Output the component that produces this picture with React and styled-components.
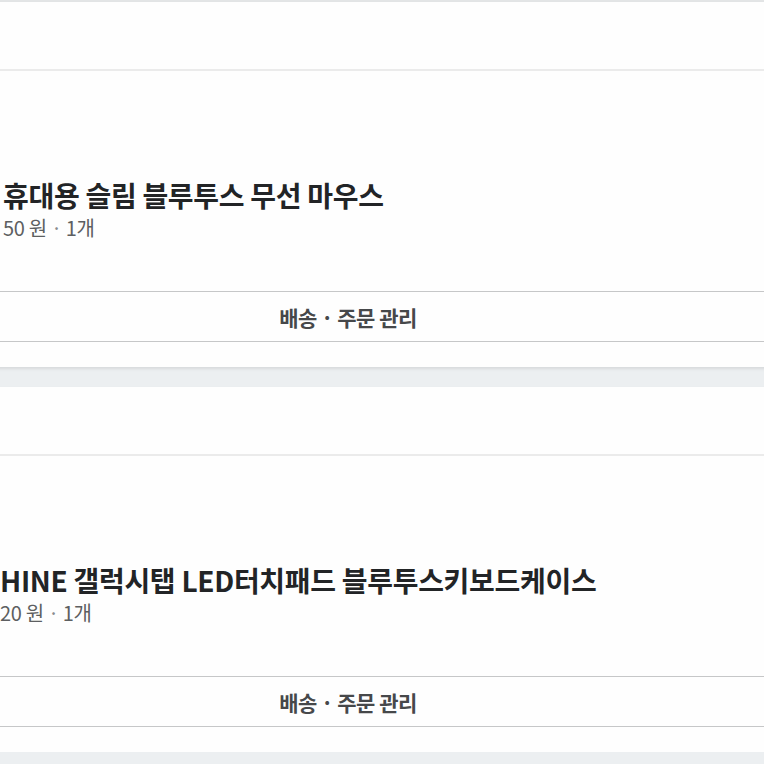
import styled, { createGlobalStyle } from "styled-components";

const GlobalStyle = createGlobalStyle`
  html, body {
    margin: 0;
    padding: 0;
    background: #eceff1;
    overflow: hidden;
  }
  body {
    font-family: "Noto Sans CJK KR", "Noto Sans", sans-serif;
  }
`;

const orders = [
  { id: 1, title: "휴대용 슬림 블루투스 무선 마우스", price: "50 원", qty: "1개" },
  {
    id: 2,
    title: "HINE 갤럭시탭 LED터치패드 블루투스키보드케이스",
    price: "20 원",
    qty: "1개",
    indent: 0,
  },
];

const App = () => {
  return (
    <>
      <GlobalStyle />
      <Page>
        {orders.map((order) => (
          <Card key={order.id}>
            <CardHead />
            <CardBody>
              <Info indent={order.indent ?? 3}>
                <Title>{order.title}</Title>
                <Meta>
                  {order.price}
                  <Dot>·</Dot>
                  {order.qty}
                </Meta>
              </Info>
              <ManageBtn>배송 · 주문 관리</ManageBtn>
            </CardBody>
          </Card>
        ))}
      </Page>
    </>
  );
};

const Page = styled.div`
  display: flex;
  flex-direction: column;
  gap: 20px;
  padding-top: 2px;
  width: 856px;
  margin-left: -80px;
  box-shadow: inset 0 2px 0 #e3e5e6;
`;

const Card = styled.section`
  background: #fefefe;
  box-shadow: 0 2px 3px rgba(0, 0, 0, 0.09);
`;

const CardHead = styled.div`
  height: 67px;
  border-bottom: 2px solid #ebebeb;
`;

const CardBody = styled.div`
  display: flex;
  flex-direction: column;
  padding: 106px 0 25px;
`;

const Info = styled.div`
  display: flex;
  flex-direction: column;
  padding-left: ${(props) => 80 + props.indent}px;
  margin-bottom: 48px;
`;

const Title = styled.div`
  font-size: 28px;
  line-height: 36px;
  font-weight: 700;
  color: #222426;
  letter-spacing: -0.3px;
  white-space: nowrap;
`;

const Meta = styled.div`
  font-size: 20px;
  line-height: 30px;
  color: #5d5f61;
  white-space: nowrap;
  letter-spacing: -0.3px;
`;

const Dot = styled.span`
  margin: 0 4px;
  color: #8a8c8e;
`;

const ManageBtn = styled.button`
  height: 51px;
  width: 100%;
  border: none;
  border-top: 1.5px solid #c6c7c8;
  border-bottom: 1.5px solid #c6c7c8;
  background: #fefefe;
  font-family: "Noto Sans CJK KR", "Noto Sans", sans-serif;
  font-size: 21px;
  font-weight: 700;
  color: #46484a;
  letter-spacing: -0.5px;
  padding: 0;
`;

export default App;
